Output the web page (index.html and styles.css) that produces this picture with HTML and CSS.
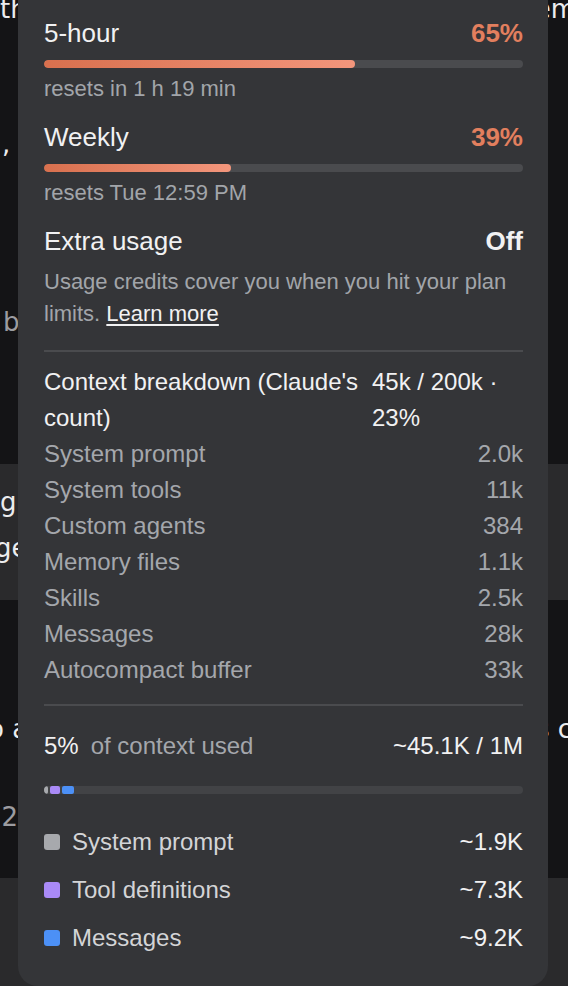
FILE: index.html
```html
<!DOCTYPE html>
<html lang="en">
<head>
<meta charset="utf-8">
<title>Usage</title>
<link rel="stylesheet" href="styles.css">
</head>
<body>
<div class="screen">
  <div class="backdrop">
    <div class="band dark band-a">
      <div class="bg-line first"><span class="frag-th">th</span><span class="frag-em">em</span></div>
      <div class="bg-line comma"><span class="frag-comma">,</span></div>
      <div class="bg-line gray b-line"><span class="frag-b">b</span></div>
    </div>
    <div class="band light band-b">
      <div class="bg-line tall"><span>g</span></div>
      <div class="bg-line tall"><span class="frag-ge">ge</span></div>
    </div>
    <div class="band dark band-c">
      <div class="bg-line oa"><span class="frag-oa">o a</span><span class="frag-sc">s c</span></div>
      <div class="bg-line gray twelve"><span class="frag-12">12</span></div>
    </div>
    <div class="band light band-d"></div>
  </div>

  <div class="panel">
    <section class="usage">
      <div class="head"><span>5-hour</span><span class="pct">65%</span></div>
      <div class="bar"><div class="bar-fill" style="width:65%"></div></div>
      <div class="reset">resets in 1 h 19 min</div>
    </section>
    <section class="usage">
      <div class="head"><span>Weekly</span><span class="pct">39%</span></div>
      <div class="bar"><div class="bar-fill" style="width:39%"></div></div>
      <div class="reset">resets Tue 12:59 PM</div>
    </section>
    <section class="extra">
      <div class="head"><span>Extra usage</span><span class="off">Off</span></div>
      <p class="desc">Usage credits cover you when you hit your plan limits. <a class="learn" href="#">Learn more</a></p>
    </section>
    <div class="sep sep-1"></div>
    <section class="breakdown">
      <div class="bd-head"><span>Context breakdown (Claude's count)</span><span>45k / 200k · 23%</span></div>
      <div class="bd-row"><span>System prompt</span><span>2.0k</span></div>
      <div class="bd-row"><span>System tools</span><span>11k</span></div>
      <div class="bd-row"><span>Custom agents</span><span>384</span></div>
      <div class="bd-row"><span>Memory files</span><span>1.1k</span></div>
      <div class="bd-row"><span>Skills</span><span>2.5k</span></div>
      <div class="bd-row"><span>Messages</span><span>28k</span></div>
      <div class="bd-row"><span>Autocompact buffer</span><span>33k</span></div>
    </section>
    <div class="sep sep-2"></div>
    <section class="context">
      <div class="ctx-head"><span><span class="ctx-pct">5%</span><span class="ctx-label">of context used</span></span><span>~45.1K / 1M</span></div>
      <div class="stack">
        <div class="seg seg-sys" style="width:4px"></div>
        <div class="seg seg-tool" style="width:10px"></div>
        <div class="seg seg-msg" style="width:12px"></div>
      </div>
      <ul class="legend">
        <li><span class="key"><i class="sq sq-sys"></i>System prompt</span><span class="val">~1.9K</span></li>
        <li><span class="key"><i class="sq sq-tool"></i>Tool definitions</span><span class="val">~7.3K</span></li>
        <li><span class="key"><i class="sq sq-msg"></i>Messages</span><span class="val">~9.2K</span></li>
      </ul>
    </section>
  </div>
</div>
</body>
</html>
```

FILE: styles.css
```css
html, body {
  margin: 0;
  padding: 0;
  background: #141416;
}

.screen {
  position: relative;
  width: 568px;
  height: 986px;
  overflow: hidden;
  font-family: "Liberation Sans", Arial, sans-serif;
}

/* ---------- backdrop (content under the popup) ---------- */
.backdrop {
  display: flex;
  flex-direction: column;
  height: 986px;
  font-family: "DejaVu Sans", sans-serif;
  font-size: 26px;
  color: #ececee;
}

.band { flex: none; box-sizing: border-box; }
.dark { background: #141416; }
.light { background: #2a2a2c; }

.band-a { height: 464px; }
.band-b { height: 136px; padding-top: 15px; }
.band-c { height: 278px; padding-top: 114px; }
.band-d { flex: 1; }

.bg-line {
  display: flex;
  justify-content: space-between;
  line-height: 30px;
  white-space: pre;
}
.bg-line.tall { line-height: 46px; }
.gray { color: #9c9ca0; }

.first { margin-top: -6px; }
.frag-em { margin-right: -8px; }
.comma { margin-top: 105px; }
.frag-comma { margin-left: 2px; }
.b-line { margin-top: 148px; }
.frag-b { margin-left: 3px; }
.frag-ge { margin-left: -5px; }
.frag-oa { margin-left: -12px; }
.frag-sc { margin-right: -4px; }
.twelve { margin-top: 58px; }
.frag-12 { margin-left: -15px; }

/* ---------- popup panel ---------- */
.panel {
  position: absolute;
  left: 18px;
  top: 0;
  width: 530px;
  height: 986px;
  box-sizing: border-box;
  padding: 17px 25px 24px 26px;
  background: #343538;
  border-radius: 0 0 20px 20px;
  color: #f1f1f2;
}

.head {
  display: flex;
  justify-content: space-between;
  font-size: 26px;
  line-height: 32px;
}

.pct {
  color: #e27f5e;
  font-weight: 700;
}

.off { font-weight: 700; }

.bar {
  height: 8px;
  margin-top: 11px;
  border-radius: 4px;
  background: #4a4b4e;
  overflow: hidden;
}

.bar-fill {
  height: 100%;
  border-radius: 4px;
  background: linear-gradient(90deg, #d8704e, #f3967c);
}

.reset {
  margin-top: 7px;
  font-size: 22px;
  line-height: 28px;
  color: #a2a5aa;
}

.usage + .usage {
  margin-top: 18px;
}

.extra {
  margin-top: 18px;
}

.desc {
  margin: 9px 0 0;
  font-size: 22px;
  line-height: 32px;
  color: #a2a5aa;
}

.learn {
  color: #f1f1f2;
  text-decoration: underline;
  text-underline-offset: 3px;
}

.sep {
  height: 2px;
  background: #4a4b4e;
}
.sep-1 { margin-top: 20px; }
.sep-2 { margin-top: 16px; }

.breakdown {
  margin-top: 12px;
  font-size: 24px;
  line-height: 36px;
}

.bd-head {
  display: grid;
  grid-template-columns: 1fr 151px;
  color: #f1f1f2;
}

.bd-row {
  display: flex;
  justify-content: space-between;
  color: #a4a7ac;
}

.context {
  margin-top: 22px;
  font-size: 24px;
  line-height: 36px;
}

.ctx-head {
  display: flex;
  justify-content: space-between;
  color: #f1f1f2;
}

.ctx-label {
  margin-left: 12px;
  color: #a4a7ac;
}

.stack {
  display: flex;
  gap: 2px;
  height: 8px;
  margin-top: 22px;
  border-radius: 4px;
  background: #424346;
  overflow: hidden;
}

.seg { height: 100%; border-radius: 2px; }
.seg-sys { background: #a7a9ad; }
.seg-tool { background: #a98af7; }
.seg-msg { background: #4c90f6; }

.legend {
  list-style: none;
  margin: 24px 0 0;
  padding: 0;
}

.legend li {
  display: flex;
  justify-content: space-between;
  align-items: center;
  height: 48px;
}

.key {
  display: flex;
  align-items: center;
  color: #d3d4d6;
}

.val { color: #f1f1f2; }

.sq {
  width: 16px;
  height: 16px;
  margin-right: 12px;
  border-radius: 3px;
}
.sq-sys { background: #a7a9ad; }
.sq-tool { background: #a98af7; }
.sq-msg { background: #4c90f6; }
```
